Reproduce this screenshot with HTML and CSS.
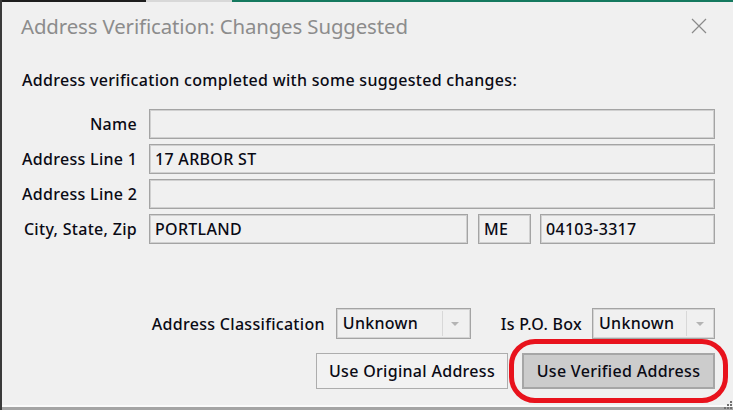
FILE: index.html
```html
<!DOCTYPE html>
<html>
<head>
<meta charset="utf-8">
<link rel="stylesheet" href="styles.css">
</head>
<body>
<div class="window">
  <div class="topstrip">
    <span class="seg seg-dark"></span>
    <span class="seg seg-light"></span>
    <span class="seg seg-teal"></span>
  </div>
  <div class="titlebar">
    <div class="title">Address Verification: Changes Suggested</div>
    <svg class="close" width="16" height="16" viewBox="0 0 16 16">
      <path d="M1 1 L15 15 M15 1 L1 15" stroke="#8a8a8a" stroke-width="1.2" fill="none"/>
    </svg>
  </div>
  <div class="message">Address verification completed with some suggested changes:</div>
  <div class="form">
    <div class="label">Name</div>
    <div class="field"><div class="box wide"></div></div>
    <div class="label">Address Line 1</div>
    <div class="field"><div class="box wide">17 ARBOR ST</div></div>
    <div class="label">Address Line 2</div>
    <div class="field"><div class="box wide"></div></div>
    <div class="label">City, State, Zip</div>
    <div class="field">
      <div class="box city">PORTLAND</div>
      <div class="box state">ME</div>
      <div class="box zip">04103-3317</div>
    </div>
  </div>
  <div class="options">
    <span class="opt-label">Address Classification</span>
    <div class="combo combo-class"><span class="combo-text">Unknown</span><span class="combo-btn"><span class="arrow"></span></span></div>
    <span class="opt-label po">Is P.O. Box</span>
    <div class="combo combo-po"><span class="combo-text">Unknown</span><span class="combo-btn"><span class="arrow"></span></span></div>
  </div>
  <div class="buttons">
    <div class="btn">Use Original Address</div>
    <div class="btn btn-active">Use Verified Address<span class="highlight"></span></div>
  </div>
  <div class="spacer"></div>
  <div class="bottom-edge"></div>
  <svg class="grip" width="11" height="9" viewBox="0 0 11 9">
    <rect x="8" y="0" width="2" height="2" fill="#707070"/>
    <rect x="5" y="3" width="2" height="2" fill="#707070"/>
    <rect x="8" y="3" width="2" height="2" fill="#707070"/>
    <rect x="2" y="6" width="2" height="2" fill="#707070"/>
    <rect x="5" y="6" width="2" height="2" fill="#707070"/>
    <rect x="8" y="6" width="2" height="2" fill="#707070"/>
  </svg>
</div>
</body>
</html>
```
FILE: styles.css
```css
* { box-sizing: border-box; }
html, body {
  margin: 0;
  padding: 0;
  background: #f0f0f0;
  font-family: "Noto Sans", "Open Sans", sans-serif;
  color: #0a0a14;
}
.window {
  position: relative;
  width: 733px;
  height: 410px;
  border-left: 2px solid #3a3a3a;
  display: flex;
  flex-direction: column;
  overflow: hidden;
}
.topstrip {
  display: flex;
  height: 2px;
  flex: none;
}
.seg { display: block; height: 2px; }
.seg-dark { width: 144px; background: #1e1e1e; }
.seg-light { width: 86px; background: #d8d8d8; }
.seg-teal { flex: 1; background: #15795f; }
.titlebar {
  height: 48px;
  flex: none;
  display: flex;
  align-items: center;
  justify-content: space-between;
  padding: 0 26px 0 19px;
}
.title {
  font-size: 20.4px;
  color: #8c8c8c;
  letter-spacing: -0.12px;
}
.close { display: block; }
.message, .label, .box, .opt-label, .combo-text, .btn {
  font-size: 16px;
  font-weight: 500;
  letter-spacing: 0.3px;
}
.message {
  margin-top: 20px;
  padding-left: 20px;
  line-height: 20px;
  height: 20px;
  white-space: nowrap;
}
.form {
  margin-top: 19px;
  display: grid;
  grid-template-columns: 115px 1fr;
  column-gap: 12px;
  row-gap: 5px;
  padding: 0 18px 0 20px;
}
.label {
  text-align: right;
  line-height: 30px;
  white-space: nowrap;
}
.field {
  display: flex;
  gap: 10px;
}
.box {
  height: 30px;
  border: 1px solid #a4a4a4;
  box-shadow: inset 0 0 0 1px #d0d0d0;
  line-height: 28px;
  padding-left: 5px;
  white-space: nowrap;
}
.wide { flex: 1; }
.city { width: 319px; }
.state { width: 53px; margin-right: -1px; }
.zip { flex: 1; }
.options {
  margin-top: 64px;
  display: flex;
  justify-content: flex-end;
  align-items: center;
  padding-right: 18px;
  height: 31px;
  flex: none;
}
.opt-label {
  margin-right: 11px;
  white-space: nowrap;
}
.opt-label.po { margin-left: 30px; margin-right: 10px; }
.combo {
  height: 31px;
  border: 1px solid #a4a4a4;
  box-shadow: inset 0 0 0 1px #d4d4d4;
  display: flex;
  align-items: stretch;
}
.combo-class { width: 135px; }
.combo-po { width: 123px; }
.combo-text {
  flex: 1;
  line-height: 29px;
  padding-left: 6px;
}
.combo-btn {
  width: 26px;
  border-left: 1px solid #d8d8d8;
  margin: 2px 2px 2px 0;
  display: flex;
  align-items: center;
  justify-content: center;
}
.arrow {
  width: 0;
  height: 0;
  border-left: 4px solid transparent;
  border-right: 4px solid transparent;
  border-top: 4px solid #b4b4b4;
}
.buttons {
  margin-top: 14px;
  display: flex;
  justify-content: flex-end;
  gap: 14px;
  padding-right: 18px;
  flex: none;
}
.btn {
  position: relative;
  height: 36px;
  border: 1px solid #adadad;
  background: #f2f2f2;
  line-height: 34px;
  text-align: center;
  width: 192px;
  white-space: nowrap;
}
.btn-active {
  width: 193px;
  background: #cccccc;
  border: 2px solid #a6a6a6;
  line-height: 32px;
}
.highlight {
  position: absolute;
  left: -15px;
  top: -16px;
  right: -15px;
  bottom: -16px;
  border: 5px solid #e8121c;
  border-radius: 26px;
  pointer-events: none;
}
.spacer { flex: 1; }
.bottom-edge {
  height: 5px;
  flex: none;
  border-top: 2px solid #fafafa;
  background: #a4a4a4;
}
.grip {
  position: absolute;
  right: 0;
  bottom: 0;
}
```
